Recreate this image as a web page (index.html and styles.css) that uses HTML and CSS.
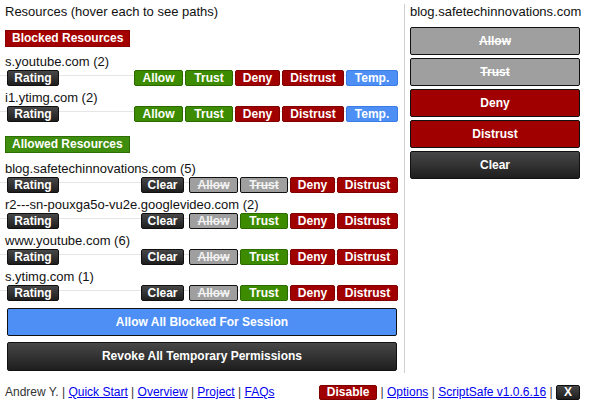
FILE: index.html
```html
<!DOCTYPE html>
<html>
<head>
<meta charset="utf-8">
<link rel="stylesheet" href="styles.css">
</head>
<body>
<div class="popup">
  <div class="main">
    <div class="left">
      <div class="title">Resources (hover each to see paths)</div>
      <div class="badge badge-blocked">Blocked Resources</div>

      <div class="entry first">
        <div class="domain">s.youtube.com (2)</div>
        <div class="actions">
          <span class="btn dark w-rating">Rating</span>
          <span class="fill"></span>
          <span class="btn green w-allow">Allow</span>
          <span class="btn green w-trust">Trust</span>
          <span class="btn red w-deny">Deny</span>
          <span class="btn red w-distrust">Distrust</span>
          <span class="btn blue w-temp">Temp.</span>
        </div>
      </div>
      <div class="entry">
        <div class="domain">i1.ytimg.com (2)</div>
        <div class="actions">
          <span class="btn dark w-rating">Rating</span>
          <span class="fill"></span>
          <span class="btn green w-allow">Allow</span>
          <span class="btn green w-trust">Trust</span>
          <span class="btn red w-deny">Deny</span>
          <span class="btn red w-distrust">Distrust</span>
          <span class="btn blue w-temp">Temp.</span>
        </div>
      </div>

      <div class="badge badge-allowed">Allowed Resources</div>

      <div class="entry first2">
        <div class="domain">blog.safetechinnovations.com (5)</div>
        <div class="actions">
          <span class="btn dark w-rating">Rating</span>
          <span class="fill"></span>
          <span class="btn dark w-clear">Clear</span>
          <span class="btn gray w-allow2">Allow</span>
          <span class="btn gray w-trust">Trust</span>
          <span class="btn red w-deny">Deny</span>
          <span class="btn red w-distrust2">Distrust</span>
        </div>
      </div>
      <div class="entry">
        <div class="domain">r2---sn-pouxga5o-vu2e.googlevideo.com (2)</div>
        <div class="actions">
          <span class="btn dark w-rating">Rating</span>
          <span class="fill"></span>
          <span class="btn dark w-clear">Clear</span>
          <span class="btn gray w-allow2">Allow</span>
          <span class="btn green w-trust">Trust</span>
          <span class="btn red w-deny">Deny</span>
          <span class="btn red w-distrust2">Distrust</span>
        </div>
      </div>
      <div class="entry">
        <div class="domain">www.youtube.com (6)</div>
        <div class="actions">
          <span class="btn dark w-rating">Rating</span>
          <span class="fill"></span>
          <span class="btn dark w-clear">Clear</span>
          <span class="btn gray w-allow2">Allow</span>
          <span class="btn green w-trust">Trust</span>
          <span class="btn red w-deny">Deny</span>
          <span class="btn red w-distrust2">Distrust</span>
        </div>
      </div>
      <div class="entry">
        <div class="domain">s.ytimg.com (1)</div>
        <div class="actions">
          <span class="btn dark w-rating">Rating</span>
          <span class="fill"></span>
          <span class="btn dark w-clear">Clear</span>
          <span class="btn gray w-allow2">Allow</span>
          <span class="btn green w-trust">Trust</span>
          <span class="btn red w-deny">Deny</span>
          <span class="btn red w-distrust2">Distrust</span>
        </div>
      </div>

      <div class="big blue big-first">Allow All Blocked For Session</div>
      <div class="big dark big-second">Revoke All Temporary Permissions</div>
    </div>

    <div class="right">
      <div class="title">blog.safetechinnovations.com</div>
      <div class="rbtn gray">Allow</div>
      <div class="rbtn gray">Trust</div>
      <div class="rbtn red">Deny</div>
      <div class="rbtn red">Distrust</div>
      <div class="rbtn dark">Clear</div>
    </div>
  </div>

  <div class="footer">
    <div class="foot-left">Andrew Y. | <a href="#">Quick Start</a> | <a href="#">Overview</a> | <a href="#">Project</a> | <a href="#">FAQs</a></div>
    <div class="foot-right"><span class="btn red w-disable">Disable</span>&nbsp;| <a href="#">Options</a> | <a href="#">ScriptSafe v1.0.6.16</a> |&nbsp;<span class="btn dark w-x">X</span></div>
  </div>
</div>
</body>
</html>
```

FILE: styles.css
```css
html, body {
  margin: 0;
  padding: 0;
  background: #fff;
}

body {
  font-family: "Liberation Sans", Arial, sans-serif;
  color: #111;
  width: 600px;
  height: 403px;
  overflow: hidden;
}

.popup {
  width: 600px;
}

.main {
  display: flex;
  padding: 4px 0 0 5px;
}

.left {
  width: 393px;
  padding: 0 6px 2px 0;
  border-right: 1px solid #d0d0d0;
}

.right {
  width: 170px;
  padding-left: 5px;
}

.title {
  font-size: 13px;
  line-height: 16px;
  color: #111;
  white-space: nowrap;
}

.badge {
  display: block;
  width: max-content;
  box-sizing: border-box;
  height: 17px;
  font-size: 12px;
  font-weight: bold;
  line-height: 15px;
  color: #fff;
  padding: 0 6px;
  border: 1px solid transparent;
  white-space: nowrap;
}

.badge-blocked {
  background: #a30000;
  border-color: #8a0000;
  margin-top: 10px;
}

.badge-allowed {
  background: #3e8d0c;
  border-color: #2e6d00;
  margin-top: 14px;
}

.entry {
  margin-top: 4px;
}

.entry.first {
  margin-top: 7px;
}

.entry.first2 {
  margin-top: 8px;
}

.domain {
  font-size: 13px;
  line-height: 16px;
  color: #111;
  white-space: nowrap;
}

.actions {
  display: flex;
  align-items: center;
  gap: 2px;
  height: 16px;
  margin-left: -5px;
  padding-left: 7px;
  background: linear-gradient(#e6e6e6, #e6e6e6) no-repeat 0 5px / 100% 1px;
}

.fill {
  flex: 1;
}

.btn {
  display: inline-block;
  box-sizing: border-box;
  height: 16px;
  line-height: 14px;
  font-size: 12px;
  font-weight: bold;
  color: #fff;
  text-align: center;
  border: 1px solid #111;
  border-radius: 2px;
  white-space: nowrap;
}

.dark {
  background: linear-gradient(#474747, #1e1e1e);
  border-color: #101010;
}

.green {
  background: #3d8c00;
  border-color: #2c6a00;
}

.red {
  background: #a00000;
  border-color: #800000;
}

.blue {
  background: #4d8ff5;
  border-color: #3a7be6;
}

.gray {
  background: #9f9f9f;
  border-color: #111;
  color: #f2f2f2;
  text-decoration: line-through;
}

.w-rating { width: 52px; }
.w-allow { width: 49px; }
.w-allow2 { width: 49px; }
.w-trust { width: 48px; }
.w-deny { width: 45px; }
.w-distrust { width: 62px; }
.w-distrust2 { width: 61px; }
.w-temp { width: 52px; }
.w-clear { width: 43px; margin-right: 3px; }
.w-disable { width: 58px; height: 15px; line-height: 13px; }
.w-x { width: 24px; height: 15px; line-height: 13px; }

.big {
  box-sizing: border-box;
  height: 28px;
  line-height: 26px;
  margin-left: 2px;
  width: 390px;
  font-size: 12px;
  font-weight: bold;
  color: #fff;
  text-align: center;
  border: 1px solid #111;
  border-radius: 2px;
}

.big-first {
  margin-top: 7px;
}

.big-second {
  margin-top: 6px;
  height: 29px;
  line-height: 27px;
}

.rbtn {
  box-sizing: border-box;
  height: 28px;
  line-height: 26px;
  margin-top: 3px;
  font-size: 12px;
  font-weight: bold;
  color: #fff;
  text-align: center;
  border: 1px solid #111;
  border-radius: 2px;
}

.title + .rbtn {
  margin-top: 7px;
}

.footer {
  display: flex;
  justify-content: space-between;
  align-items: center;
  width: 575px;
  padding-left: 5px;
  margin-top: 11px;
  height: 16px;
  font-size: 12px;
  color: #333;
}

.foot-left, .foot-right {
  display: flex;
  align-items: center;
  white-space: pre;
}

.footer a {
  color: #0000ee;
  text-decoration: underline;
}
```
